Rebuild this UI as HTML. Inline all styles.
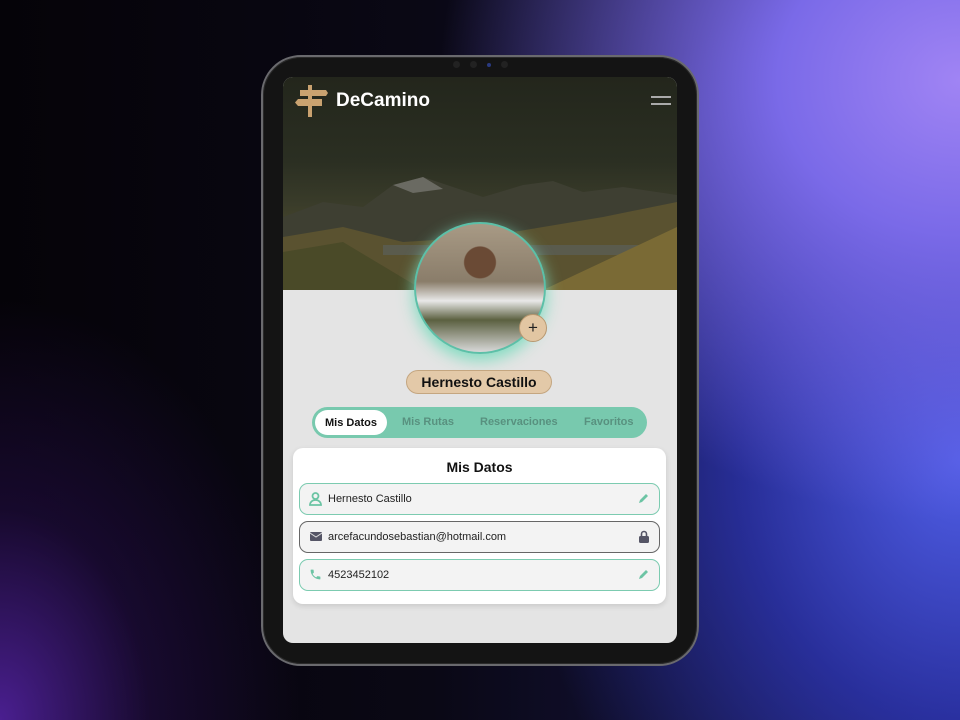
<!DOCTYPE html><html><head><style>
*{margin:0;padding:0;box-sizing:border-box}
body{width:960px;height:720px;overflow:hidden;font-family:"Liberation Sans",sans-serif;position:relative;
background:radial-gradient(ellipse 520px 440px at 960px 80px,#a084f4 0%,#7a6ae8 35%,rgba(80,80,220,0) 100%),
radial-gradient(ellipse 440px 520px at 960px 460px,#505ee6 0%,rgba(50,60,200,.65) 50%,rgba(0,0,0,0) 100%),
radial-gradient(ellipse 300px 420px at 0px 720px,#4a1f90 0%,rgba(40,15,80,.5) 50%,rgba(0,0,0,0) 100%),
linear-gradient(90deg,#050308 0%,#0a0815 45%,#1a1a55 100%);}
.frame{position:absolute;left:261px;top:55px;width:438px;height:611px;border-radius:40px;background:#141414;border:2px solid #6a6a6e;box-shadow:0 0 0 1px #2a2a2a inset}
.screen{position:absolute;left:283px;top:77px;width:394px;height:566px;border-radius:10px;overflow:hidden;background:#e4e4e4}
.hero{position:absolute;left:0;top:0;width:394px;height:213px;background:linear-gradient(180deg,#23261c 0%,#2b2f22 40%,#3a3c2a 60%,#55502e 85%,#6a5a30 100%)}
.logo{position:absolute;left:53px;top:13px;color:#fff;font-weight:bold;font-size:19px}
.field{position:absolute;left:6px;width:361px;height:32px;border:1.5px solid #7ccbb0;border-radius:9px;background:#f3f3f3;font-size:11px;color:#222;padding-left:28px;line-height:31px}
.field svg{position:absolute}
.tab{position:absolute;top:9px;font-weight:bold}
</style></head><body>
<div class="frame"></div>
<div style="position:absolute;left:440px;top:61px;width:80px;height:8px;display:flex;gap:10px;justify-content:center"><i style="width:7px;height:7px;border-radius:50%;background:#222"></i><i style="width:7px;height:7px;border-radius:50%;background:#222"></i><i style="width:4px;height:4px;border-radius:50%;background:#2a3a80;margin-top:2px"></i><i style="width:7px;height:7px;border-radius:50%;background:#222"></i></div>
<div class="screen">
 <div class="hero">
  <svg width="394" height="213" style="position:absolute;left:0;top:0">
   <polygon points="0,140 40,125 80,130 110,108 140,100 170,110 200,120 240,108 270,104 300,115 340,110 394,118 394,213 0,213" fill="#3e3f32"/>
   <polygon points="110,108 140,100 160,112 130,116" fill="#6a6a62"/>
   <polygon points="0,160 60,150 120,165 200,160 260,150 320,140 394,125 394,213 0,213" fill="#5a5230"/>
   <rect x="100" y="168" width="294" height="10" fill="#5a6360" opacity=".6"/>
   <polygon points="0,175 60,165 140,213 0,213" fill="#4a4a28"/>
   <polygon points="260,213 394,150 394,213" fill="#7a6a35"/>
  </svg>
  <svg width="36" height="32" style="position:absolute;left:11px;top:8px" viewBox="0 0 36 32"><rect x="14" y="0" width="4" height="32" fill="#c9a270"/><polygon points="6,5 32,5 34,8 32,11 6,11" fill="#c9a270"/><polygon points="4,14 28,14 28,21 4,21 1,17.5" fill="#c9a270"/></svg>
  <div class="logo">DeCamino</div>
  <div style="position:absolute;left:368px;top:19px;width:20px;height:1.5px;background:#aaa"></div>
  <div style="position:absolute;left:368px;top:26px;width:20px;height:1.5px;background:#aaa"></div>
 </div>
 <div style="position:absolute;left:131px;top:145px;width:132px;height:132px;border-radius:50%;border:2.5px solid #5cc0a8;box-shadow:0 6px 16px #7ddcbf;background:radial-gradient(circle at 50% 30%,#6a4a35 0 14%,transparent 15%),linear-gradient(180deg,#a89a85 0%,#8a7d6a 45%,#e8e8e8 60%,#5b6040 75%,#d8d8d8 100%);overflow:hidden"></div>
 <div style="position:absolute;left:236px;top:237px;width:28px;height:28px;border-radius:50%;background:#e2c6a2;border:1.5px solid #b89870;text-align:center;line-height:25px;font-size:17px;color:#222">+</div>
 <div style="position:absolute;left:123px;top:293px;width:146px;height:24px;border-radius:12px;background:#e3c9a8;border:1.5px solid #c4a680;text-align:center;line-height:22px;font-weight:bold;font-size:14px;color:#111">Hernesto Castillo</div>
 <div style="position:absolute;left:29px;top:330px;width:335px;height:31px;border-radius:16px;background:#78c9ae;font-size:11px;color:#58917f">
  <div style="position:absolute;left:3px;top:3px;width:72px;height:25px;border-radius:13px;background:#fff;color:#111;text-align:center;line-height:26px;font-weight:bold">Mis Datos</div>
  <span class="tab" style="left:90px">Mis Rutas</span>
  <span class="tab" style="left:168px">Reservaciones</span>
  <span class="tab" style="left:272px">Favoritos</span>
 </div>
 <div style="position:absolute;left:10px;top:371px;width:373px;height:156px;border-radius:10px;background:#fff;box-shadow:0 2px 6px rgba(0,0,0,.12)">
  <div style="text-align:center;font-size:14px;font-weight:bold;margin-top:11px;color:#111">Mis Datos</div>
  <div class="field" style="top:35px">Hernesto Castillo
   <svg style="left:9px;top:8px" width="13" height="14" viewBox="0 0 13 14"><circle cx="6.5" cy="4" r="3" fill="none" stroke="#6cc4a4" stroke-width="1.8"/><path d="M1 13c0-3 2.5-5 5.5-5s5.5 2 5.5 5z" fill="none" stroke="#6cc4a4" stroke-width="1.8"/></svg>
   <svg style="right:10px;top:9px" width="11" height="11" viewBox="0 0 11 11"><path d="M1 10l1-3 6-6 2 2-6 6z" fill="#6cc4a4"/></svg></div>
  <div class="field" style="top:73px;border-color:#666">arcefacundosebastian@hotmail.com
   <svg style="left:10px;top:10px" width="12" height="9" viewBox="0 0 12 9"><rect width="12" height="9" rx="1" fill="#556"/><path d="M0 1l6 4 6-4" stroke="#ddd" fill="none"/></svg>
   <svg style="right:10px;top:8px" width="10" height="13" viewBox="0 0 10 13"><path d="M2.5 6V4a2.5 2.5 0 015 0v2" stroke="#556" stroke-width="1.6" fill="none"/><rect y="6" width="10" height="7" rx="1.5" fill="#556"/></svg></div>
  <div class="field" style="top:111px">4523452102
   <svg style="left:9px;top:8px" width="13" height="13" viewBox="0 0 24 24"><path d="M6.6 10.8c1.4 2.8 3.8 5.1 6.6 6.6l2.2-2.2c.3-.3.7-.4 1-.2 1.1.4 2.3.6 3.6.6.6 0 1 .4 1 1V20c0 .6-.4 1-1 1C10.6 21 3 13.4 3 4c0-.6.4-1 1-1h3.5c.6 0 1 .4 1 1 0 1.3.2 2.5.6 3.6.1.3 0 .7-.2 1z" fill="#6cc4a4"/></svg>
   <svg style="right:10px;top:9px" width="11" height="11" viewBox="0 0 11 11"><path d="M1 10l1-3 6-6 2 2-6 6z" fill="#6cc4a4"/></svg></div>
 </div>
</div>
</body></html>
